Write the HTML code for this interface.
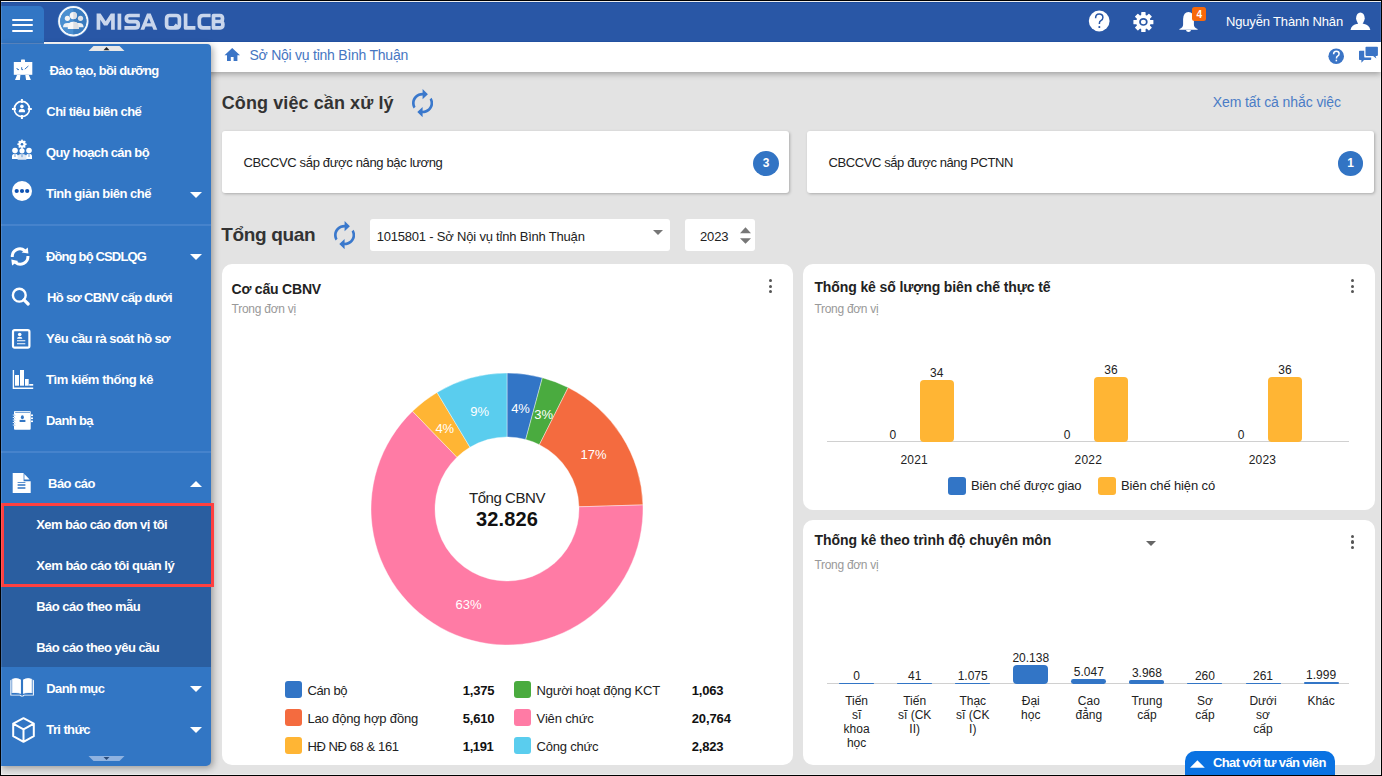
<!DOCTYPE html>
<html><head><meta charset="utf-8"><style>*{box-sizing:border-box;margin:0;padding:0}
html,body{width:1382px;height:776px;overflow:hidden;background:#000;font-family:"Liberation Sans",sans-serif}
.a{position:absolute}
.tx{position:absolute;white-space:nowrap}
#frame{position:absolute;left:1px;top:1px;width:1380px;height:774px;background:#ededed}
.fl{position:absolute;pointer-events:none}
#pg{position:absolute;left:0;top:0;width:1382px;height:776px;clip-path:inset(2px 1px 1px 1px);overflow:hidden}
</style></head><body>
<div id="frame"></div>
<div id="pg">
<div class='a' style='left:2px;top:2px;width:1378px;height:772px;background:#e3e3e3'></div>
<div class='tx' style='left:221.70px;top:92.00px;font-size:18px;line-height:22px;font-weight:700;color:#333;letter-spacing:0.100px;'>Công việc cần xử lý</div>
<svg class='a' style='left:411.8px;top:88.8px' width='21.2' height='28.2' viewBox='4 1 16 22' preserveAspectRatio='none'><path d='M12 6v3l4-4-4-4v3c-4.42 0-8 3.58-8 8 0 1.57.46 3.03 1.24 4.26L6.7 14.8c-.45-.83-.7-1.79-.7-2.8 0-3.31 2.69-6 6-6zm6.76 1.74L17.3 9.2c.44.84.7 1.79.7 2.8 0 3.31-2.69 6-6 6v-3l-4 4 4 4v-3c4.42 0 8-3.58 8-8 0-1.57-.46-3.03-1.24-4.26z' fill='#3a78cc'/></svg>
<div class='tx' style='left:1212.70px;top:93.00px;font-size:14px;line-height:18px;font-weight:400;color:#4a7cc6;letter-spacing:-0.083px;'>Xem tất cả nhắc việc</div>
<div class='a' style='left:222px;top:131px;width:567px;height:62px;background:#fff;border-radius:3px;box-shadow:1px 1px 3px rgba(0,0,0,.25)'></div>
<div class='tx' style='left:243.50px;top:155.00px;font-size:13px;line-height:16px;font-weight:400;color:#222;letter-spacing:-0.344px;'>CBCCVC sắp được nâng bậc lương</div>
<div class='a' style='left:753.2px;top:150.5px;width:25.6px;height:25px;border-radius:50%;background:#3274c4'></div>
<div class='tx' style='left:762.66px;top:156.00px;font-size:12px;line-height:15px;font-weight:700;color:#fff;letter-spacing:0.000px;'>3</div>
<div class='a' style='left:807px;top:131px;width:567px;height:62px;background:#fff;border-radius:3px;box-shadow:1px 1px 3px rgba(0,0,0,.25)'></div>
<div class='tx' style='left:828.50px;top:155.00px;font-size:13px;line-height:16px;font-weight:400;color:#222;letter-spacing:-0.403px;'>CBCCVC sắp được nâng PCTNN</div>
<div class='a' style='left:1337.9px;top:150.5px;width:25.6px;height:25px;border-radius:50%;background:#3274c4'></div>
<div class='tx' style='left:1347.36px;top:156.00px;font-size:12px;line-height:15px;font-weight:700;color:#fff;letter-spacing:0.000px;'>1</div>
<div class='tx' style='left:221.30px;top:223.00px;font-size:19px;line-height:24px;font-weight:700;color:#333;letter-spacing:-0.344px;'>Tổng quan</div>
<svg class='a' style='left:333.6px;top:221px' width='21.2' height='28.2' viewBox='4 1 16 22' preserveAspectRatio='none'><path d='M12 6v3l4-4-4-4v3c-4.42 0-8 3.58-8 8 0 1.57.46 3.03 1.24 4.26L6.7 14.8c-.45-.83-.7-1.79-.7-2.8 0-3.31 2.69-6 6-6zm6.76 1.74L17.3 9.2c.44.84.7 1.79.7 2.8 0 3.31-2.69 6-6 6v-3l-4 4 4 4v-3c4.42 0 8-3.58 8-8 0-1.57-.46-3.03-1.24-4.26z' fill='#3a78cc'/></svg>
<div class='a' style='left:370px;top:219px;width:300px;height:32px;background:#fff;border-radius:3px'></div>
<div class='tx' style='left:376.70px;top:229.00px;font-size:13px;line-height:16px;font-weight:400;color:#222;letter-spacing:-0.200px;'>1015801 - Sở Nội vụ tỉnh Bình Thuận</div>
<svg class='a' style='left:653px;top:230px' width='10' height='5' viewBox='0 0 10 5'><path d='M0 0H10L5 5Z' fill='#777'/></svg>
<div class='a' style='left:685px;top:219px;width:70px;height:32px;background:#fff;border-radius:3px'></div>
<div class='tx' style='left:700.00px;top:229.00px;font-size:13px;line-height:16px;font-weight:400;color:#222;letter-spacing:-0.105px;'>2023</div>
<svg class='a' style='left:739.5px;top:226.5px' width='11' height='17' viewBox='0 0 11 17'><path d='M0 6.3H11L5.5 0.3Z M0 11.3H11L5.5 16.8Z' fill='#777'/></svg>
<div class='a' style='left:222px;top:264px;width:571px;height:501px;background:#fff;border-radius:10px'></div>
<div class='a' style='left:803px;top:264px;width:572px;height:246px;background:#fff;border-radius:10px'></div>
<div class='a' style='left:803px;top:520px;width:572px;height:245px;background:#fff;border-radius:10px'></div>
<div class='tx' style='left:231.50px;top:280.00px;font-size:14px;line-height:18px;font-weight:700;color:#222;letter-spacing:-0.195px;'>Cơ cấu CBNV</div>
<div class='tx' style='left:231.50px;top:302.00px;font-size:12px;line-height:15px;font-weight:400;color:#999;letter-spacing:-0.246px;'>Trong đơn vị</div>
<div class='a' style='left:768.9px;top:279.1px;width:3.4px;height:3.4px;border-radius:50%;background:#555'></div><div class='a' style='left:768.9px;top:284.6px;width:3.4px;height:3.4px;border-radius:50%;background:#555'></div><div class='a' style='left:768.9px;top:290.1px;width:3.4px;height:3.4px;border-radius:50%;background:#555'></div>
<svg class='a' style='left:357.1px;top:359.4px' width='300' height='300' viewBox='0 0 300 300'><path d='M150.000 14.000 A136 136 0 0 1 185.382 18.683 L168.731 80.479 A72 72 0 0 0 150.000 78.000Z' fill='#3275c6' stroke='#fff' stroke-width='0.4'/><path d='M185.382 18.683 A136 136 0 0 1 211.187 28.541 L182.393 85.698 A72 72 0 0 0 168.731 80.479Z' fill='#4aab3f' stroke='#fff' stroke-width='0.4'/><path d='M211.187 28.541 A136 136 0 0 1 285.937 145.875 L221.967 147.816 A72 72 0 0 0 182.393 85.698Z' fill='#f46b3f' stroke='#fff' stroke-width='0.4'/><path d='M285.937 145.875 A136 136 0 1 1 55.490 52.205 L99.965 98.226 A72 72 0 1 0 221.967 147.816Z' fill='#ff7ba5' stroke='#fff' stroke-width='0.4'/><path d='M55.490 52.205 A136 136 0 0 1 80.037 33.376 L112.961 88.258 A72 72 0 0 0 99.965 98.226Z' fill='#ffb534' stroke='#fff' stroke-width='0.4'/><path d='M80.037 33.376 A136 136 0 0 1 150.000 14.000 L150.000 78.000 A72 72 0 0 0 112.961 88.258Z' fill='#5acdee' stroke='#fff' stroke-width='0.4'/></svg>
<div class='tx' style='left:511.14px;top:401.00px;font-size:13px;line-height:16px;font-weight:400;color:#fff;letter-spacing:0.000px;'>4%</div>
<div class='tx' style='left:534.25px;top:407.00px;font-size:13px;line-height:16px;font-weight:400;color:#fff;letter-spacing:0.000px;'>3%</div>
<div class='tx' style='left:580.45px;top:447.00px;font-size:13px;line-height:16px;font-weight:400;color:#fff;letter-spacing:0.000px;'>17%</div>
<div class='tx' style='left:455.53px;top:597.00px;font-size:13px;line-height:16px;font-weight:400;color:#fff;letter-spacing:0.000px;'>63%</div>
<div class='tx' style='left:435.38px;top:421.00px;font-size:13px;line-height:16px;font-weight:400;color:#fff;letter-spacing:0.000px;'>4%</div>
<div class='tx' style='left:470.37px;top:404.00px;font-size:13px;line-height:16px;font-weight:400;color:#fff;letter-spacing:0.000px;'>9%</div>
<div class='tx' style='left:469.00px;top:488.00px;font-size:15px;line-height:19px;font-weight:400;color:#222;letter-spacing:-0.450px;'>Tổng CBNV</div>
<div class='tx' style='left:476.00px;top:507.00px;font-size:20px;line-height:25px;font-weight:700;color:#111;letter-spacing:0.138px;'>32.826</div>
<div class='a' style='left:284.5px;top:681.4px;width:17px;height:17px;border-radius:3px;background:#3275c6'></div>
<div class='tx' style='left:307.40px;top:683.00px;font-size:13px;line-height:16px;font-weight:400;color:#222;letter-spacing:-0.354px;'>Cán bộ</div>
<div class='tx' style='left:462.80px;top:683.00px;font-size:13px;line-height:16px;font-weight:700;color:#111;letter-spacing:-0.229px;'>1,375</div>
<div class='a' style='left:284.5px;top:709.3px;width:17px;height:17px;border-radius:3px;background:#f46b3f'></div>
<div class='tx' style='left:307.40px;top:711.00px;font-size:13px;line-height:16px;font-weight:400;color:#222;letter-spacing:-0.151px;'>Lao động hợp đồng</div>
<div class='tx' style='left:462.80px;top:711.00px;font-size:13px;line-height:16px;font-weight:700;color:#111;letter-spacing:-0.229px;'>5,610</div>
<div class='a' style='left:284.5px;top:737.3px;width:17px;height:17px;border-radius:3px;background:#ffb534'></div>
<div class='tx' style='left:307.40px;top:739.00px;font-size:13px;line-height:16px;font-weight:400;color:#222;letter-spacing:-0.402px;'>HĐ NĐ 68 &amp; 161</div>
<div class='tx' style='left:462.80px;top:739.00px;font-size:13px;line-height:16px;font-weight:700;color:#111;letter-spacing:-0.389px;'>1,191</div>
<div class='a' style='left:513.7px;top:681.4px;width:17px;height:17px;border-radius:3px;background:#4aab3f'></div>
<div class='tx' style='left:536.60px;top:683.00px;font-size:13px;line-height:16px;font-weight:400;color:#222;letter-spacing:-0.237px;'>Người hoạt động KCT</div>
<div class='tx' style='left:691.70px;top:683.00px;font-size:13px;line-height:16px;font-weight:700;color:#111;letter-spacing:-0.189px;'>1,063</div>
<div class='a' style='left:513.7px;top:709.3px;width:17px;height:17px;border-radius:3px;background:#ff7ba5'></div>
<div class='tx' style='left:536.60px;top:711.00px;font-size:13px;line-height:16px;font-weight:400;color:#222;letter-spacing:-0.149px;'>Viên chức</div>
<div class='tx' style='left:691.70px;top:711.00px;font-size:13px;line-height:16px;font-weight:700;color:#111;letter-spacing:-0.111px;'>20,764</div>
<div class='a' style='left:513.7px;top:737.3px;width:17px;height:17px;border-radius:3px;background:#5acdee'></div>
<div class='tx' style='left:536.60px;top:739.00px;font-size:13px;line-height:16px;font-weight:400;color:#222;letter-spacing:-0.225px;'>Công chức</div>
<div class='tx' style='left:691.70px;top:739.00px;font-size:13px;line-height:16px;font-weight:700;color:#111;letter-spacing:-0.189px;'>2,823</div>
<div class='tx' style='left:814.40px;top:278.00px;font-size:14px;line-height:18px;font-weight:700;color:#222;letter-spacing:-0.102px;'>Thống kê số lượng biên chế thực tế</div>
<div class='tx' style='left:814.40px;top:302.00px;font-size:12px;line-height:15px;font-weight:400;color:#999;letter-spacing:-0.288px;'>Trong đơn vị</div>
<div class='a' style='left:1351.1px;top:279.1px;width:3.4px;height:3.4px;border-radius:50%;background:#555'></div><div class='a' style='left:1351.1px;top:284.6px;width:3.4px;height:3.4px;border-radius:50%;background:#555'></div><div class='a' style='left:1351.1px;top:290.1px;width:3.4px;height:3.4px;border-radius:50%;background:#555'></div>
<div class='a' style='left:827px;top:441px;width:522px;height:1px;background:#d0d0d0'></div>
<div class='a' style='left:920.0px;top:379.8px;width:33.5px;height:62.19999999999999px;border-radius:4px;background:#ffb534'></div>
<div class='tx' style='left:930.07px;top:366.00px;font-size:12px;line-height:15px;font-weight:400;color:#222;letter-spacing:0.000px;'>34</div>
<div class='tx' style='left:889.56px;top:428.00px;font-size:12px;line-height:15px;font-weight:400;color:#222;letter-spacing:0.000px;'>0</div>
<div class='tx' style='left:900.40px;top:453.00px;font-size:12px;line-height:15px;font-weight:400;color:#222;letter-spacing:0.199px;'>2021</div>
<div class='a' style='left:1094.15px;top:377px;width:33.5px;height:65px;border-radius:4px;background:#ffb534'></div>
<div class='tx' style='left:1104.22px;top:363.00px;font-size:12px;line-height:15px;font-weight:400;color:#222;letter-spacing:0.000px;'>36</div>
<div class='tx' style='left:1063.71px;top:428.00px;font-size:12px;line-height:15px;font-weight:400;color:#222;letter-spacing:0.000px;'>0</div>
<div class='tx' style='left:1074.55px;top:453.00px;font-size:12px;line-height:15px;font-weight:400;color:#222;letter-spacing:0.199px;'>2022</div>
<div class='a' style='left:1268.3px;top:377px;width:33.5px;height:65px;border-radius:4px;background:#ffb534'></div>
<div class='tx' style='left:1278.37px;top:363.00px;font-size:12px;line-height:15px;font-weight:400;color:#222;letter-spacing:0.000px;'>36</div>
<div class='tx' style='left:1237.86px;top:428.00px;font-size:12px;line-height:15px;font-weight:400;color:#222;letter-spacing:0.000px;'>0</div>
<div class='tx' style='left:1248.70px;top:453.00px;font-size:12px;line-height:15px;font-weight:400;color:#222;letter-spacing:0.199px;'>2023</div>
<div class='a' style='left:947.5px;top:477px;width:18px;height:18px;border-radius:3px;background:#3275c6'></div>
<div class='tx' style='left:970.90px;top:478.00px;font-size:13px;line-height:16px;font-weight:400;color:#222;letter-spacing:-0.159px;'>Biên chế được giao</div>
<div class='a' style='left:1097.5px;top:477px;width:18px;height:18px;border-radius:3px;background:#ffb534'></div>
<div class='tx' style='left:1121.00px;top:478.00px;font-size:13px;line-height:16px;font-weight:400;color:#222;letter-spacing:-0.133px;'>Biên chế hiện có</div>
<div class='tx' style='left:814.40px;top:531.00px;font-size:14px;line-height:18px;font-weight:700;color:#222;letter-spacing:-0.030px;'>Thống kê theo trình độ chuyên môn</div>
<div class='tx' style='left:814.40px;top:558.00px;font-size:12px;line-height:15px;font-weight:400;color:#999;letter-spacing:-0.288px;'>Trong đơn vị</div>
<svg class='a' style='left:1146px;top:540.5px' width='10' height='5' viewBox='0 0 10 5'><path d='M0 0H10L5 5Z' fill='#666'/></svg>
<div class='a' style='left:1351.1px;top:534.6999999999999px;width:3.4px;height:3.4px;border-radius:50%;background:#555'></div><div class='a' style='left:1351.1px;top:540.1999999999999px;width:3.4px;height:3.4px;border-radius:50%;background:#555'></div><div class='a' style='left:1351.1px;top:545.6999999999999px;width:3.4px;height:3.4px;border-radius:50%;background:#555'></div>
<div class='a' style='left:827px;top:683px;width:522px;height:1px;background:#d0d0d0'></div>
<div class='a' style='left:839.1px;top:682.60px;width:35px;height:1.00px;border-radius:0.50px;background:#3275c6'></div>
<div class='tx' style='left:853.26px;top:669.00px;font-size:12px;line-height:15px;font-weight:400;color:#222;letter-spacing:0.000px;'>0</div>
<div class='tx' style='left:845.15px;top:694.00px;font-size:12px;line-height:15px;font-weight:400;color:#222;letter-spacing:0.000px;'>Tiến</div>
<div class='tx' style='left:851.93px;top:708.00px;font-size:12px;line-height:15px;font-weight:400;color:#222;letter-spacing:0.000px;'>sĩ</div>
<div class='tx' style='left:843.58px;top:722.00px;font-size:12px;line-height:15px;font-weight:400;color:#222;letter-spacing:0.000px;'>khoa</div>
<div class='tx' style='left:846.92px;top:736.00px;font-size:12px;line-height:15px;font-weight:400;color:#222;letter-spacing:0.000px;'>học</div>
<div class='a' style='left:897.1600000000001px;top:682.60px;width:35px;height:1.00px;border-radius:0.50px;background:#3275c6'></div>
<div class='tx' style='left:907.98px;top:669.00px;font-size:12px;line-height:15px;font-weight:400;color:#222;letter-spacing:0.000px;'>41</div>
<div class='tx' style='left:903.21px;top:694.00px;font-size:12px;line-height:15px;font-weight:400;color:#222;letter-spacing:0.000px;'>Tiến</div>
<div class='tx' style='left:897.99px;top:708.00px;font-size:12px;line-height:15px;font-weight:400;color:#222;letter-spacing:0.000px;'>sĩ (CK</div>
<div class='tx' style='left:909.32px;top:722.00px;font-size:12px;line-height:15px;font-weight:400;color:#222;letter-spacing:0.000px;'>II)</div>
<div class='a' style='left:955.22px;top:682.59px;width:35px;height:1.01px;border-radius:0.51px;background:#3275c6'></div>
<div class='tx' style='left:957.70px;top:669.00px;font-size:12px;line-height:15px;font-weight:400;color:#222;letter-spacing:0.000px;'>1.075</div>
<div class='tx' style='left:959.38px;top:694.00px;font-size:12px;line-height:15px;font-weight:400;color:#222;letter-spacing:0.000px;'>Thạc</div>
<div class='tx' style='left:956.05px;top:708.00px;font-size:12px;line-height:15px;font-weight:400;color:#222;letter-spacing:0.000px;'>sĩ (CK</div>
<div class='tx' style='left:969.05px;top:722.00px;font-size:12px;line-height:15px;font-weight:400;color:#222;letter-spacing:0.000px;'>I)</div>
<div class='a' style='left:1013.28px;top:664.60px;width:35px;height:19.00px;border-radius:4.00px;background:#3275c6'></div>
<div class='tx' style='left:1012.43px;top:651.00px;font-size:12px;line-height:15px;font-weight:400;color:#222;letter-spacing:0.000px;'>20.138</div>
<div class='tx' style='left:1021.77px;top:694.00px;font-size:12px;line-height:15px;font-weight:400;color:#222;letter-spacing:0.000px;'>Đại</div>
<div class='tx' style='left:1021.10px;top:708.00px;font-size:12px;line-height:15px;font-weight:400;color:#222;letter-spacing:0.000px;'>học</div>
<div class='a' style='left:1071.3400000000001px;top:678.84px;width:35px;height:4.76px;border-radius:2.38px;background:#3275c6'></div>
<div class='tx' style='left:1073.82px;top:665.00px;font-size:12px;line-height:15px;font-weight:400;color:#222;letter-spacing:0.000px;'>5.047</div>
<div class='tx' style='left:1077.83px;top:694.00px;font-size:12px;line-height:15px;font-weight:400;color:#222;letter-spacing:0.000px;'>Cao</div>
<div class='tx' style='left:1075.49px;top:708.00px;font-size:12px;line-height:15px;font-weight:400;color:#222;letter-spacing:0.000px;'>đẳng</div>
<div class='a' style='left:1129.4px;top:679.86px;width:35px;height:3.74px;border-radius:1.87px;background:#3275c6'></div>
<div class='tx' style='left:1131.88px;top:666.00px;font-size:12px;line-height:15px;font-weight:400;color:#222;letter-spacing:0.000px;'>3.968</div>
<div class='tx' style='left:1131.45px;top:694.00px;font-size:12px;line-height:15px;font-weight:400;color:#222;letter-spacing:0.000px;'>Trung</div>
<div class='tx' style='left:1137.22px;top:708.00px;font-size:12px;line-height:15px;font-weight:400;color:#222;letter-spacing:0.000px;'>cấp</div>
<div class='a' style='left:1187.46px;top:682.60px;width:35px;height:1.00px;border-radius:0.50px;background:#3275c6'></div>
<div class='tx' style='left:1194.94px;top:669.00px;font-size:12px;line-height:15px;font-weight:400;color:#222;letter-spacing:0.000px;'>260</div>
<div class='tx' style='left:1197.02px;top:694.00px;font-size:12px;line-height:15px;font-weight:400;color:#222;letter-spacing:0.000px;'>Sơ</div>
<div class='tx' style='left:1195.28px;top:708.00px;font-size:12px;line-height:15px;font-weight:400;color:#222;letter-spacing:0.000px;'>cấp</div>
<div class='a' style='left:1245.52px;top:682.60px;width:35px;height:1.00px;border-radius:0.50px;background:#3275c6'></div>
<div class='tx' style='left:1253.00px;top:669.00px;font-size:12px;line-height:15px;font-weight:400;color:#222;letter-spacing:0.000px;'>261</div>
<div class='tx' style='left:1249.40px;top:694.00px;font-size:12px;line-height:15px;font-weight:400;color:#222;letter-spacing:0.000px;'>Dưới</div>
<div class='tx' style='left:1256.08px;top:708.00px;font-size:12px;line-height:15px;font-weight:400;color:#222;letter-spacing:0.000px;'>sơ</div>
<div class='tx' style='left:1253.34px;top:722.00px;font-size:12px;line-height:15px;font-weight:400;color:#222;letter-spacing:0.000px;'>cấp</div>
<div class='a' style='left:1303.58px;top:681.71px;width:35px;height:1.89px;border-radius:0.94px;background:#3275c6'></div>
<div class='tx' style='left:1306.06px;top:668.00px;font-size:12px;line-height:15px;font-weight:400;color:#222;letter-spacing:0.000px;'>1.999</div>
<div class='tx' style='left:1307.40px;top:694.00px;font-size:12px;line-height:15px;font-weight:400;color:#222;letter-spacing:0.000px;'>Khác</div>
<div class='a' style='left:1185px;top:751px;width:150px;height:30px;background:#0a72e2;border-radius:10px 10px 0 0'></div>
<svg class='a' style='left:1190px;top:760px' width='15' height='8' viewBox='0 0 15 8'><path d='M0 7.8H14.8L7.4 0.2Z' fill='#fff'/></svg>
<div class='tx' style='left:1213.00px;top:755.00px;font-size:13px;line-height:16px;font-weight:700;color:#fff;letter-spacing:-0.644px;'>Chat với tư vấn viên</div>
<div class='a' style='left:0;top:42px;width:1382px;height:30px;background:#fff;box-shadow:0 3px 6px -1px rgba(0,0,0,.3)'></div>
<svg class='a' style='left:224px;top:47px' width='17' height='15' viewBox='0 0 17 15'>
<path d='M8.2 1 L0.5 8.2 H3 V14 H6.8 V10 H9.6 V14 H13.4 V8.2 H16 Z' fill='#3a74c6'/>
</svg>
<div class='tx' style='left:249.50px;top:46.00px;font-size:14px;line-height:18px;font-weight:400;color:#4676c2;letter-spacing:-0.243px;'>Sở Nội vụ tỉnh Bình Thuận</div>
<svg class='a' style='left:1328px;top:48px' width='17' height='17' viewBox='0 0 17 17'>
<circle cx='8.2' cy='8.2' r='7.8' fill='#3a74c6'/>
<path d='M5.6 6.3 q0-3 2.7-3 q2.8 0 2.8 2.5 q0 1.5-1.5 2.3 q-1.1.7-1.1 1.9 v.6' fill='none' stroke='#fff' stroke-width='1.5'/>
<rect x='7.6' y='11.7' width='1.5' height='1.6' fill='#fff'/>
</svg>
<svg class='a' style='left:1358px;top:46px' width='21' height='18' viewBox='0 0 21 18'>
<path d='M7.5 1.5 q0-.8.8-.8 h10.8 q.8 0 .8.8 v7.6 q0 .8-.8.8 h-1.5 l.8 2.6 l-3.3-2.6 h-6.8 q-.8 0-.8-.8z' fill='#3a74c6'/>
<path d='M1 5.6 q0-.8.8-.8 h4.4 v5.6 q0 1.2 1.2 1.2 h5.8 v1.7 q0 .8-.8.8 h-6.4 l-2.6 2.7 v-2.7 h-1.6 q-.8 0-.8-.8z' fill='#3a74c6'/>
</svg>
<div class='a' style='left:0;top:0;width:1382px;height:42px;background:#2957a6'></div>
<div class='a' style='left:0;top:2px;width:1382px;height:1px;background:#1d4d9e'></div>
<div class='a' style='left:0;top:41px;width:1382px;height:1px;background:#2251a0'></div>
<div class='a' style='left:0;top:6px;width:44px;height:37px;background:#3276c4;border-top-right-radius:5px'></div>
<div class='a' style='left:0;top:43px;width:44px;height:1px;background:#5d8ccb'></div>
<div class='a' style='left:12px;top:19px;width:21px;height:2px;background:#fff;border-radius:1px'></div>
<div class='a' style='left:12px;top:24px;width:21px;height:2px;background:#fff;border-radius:1px'></div>
<div class='a' style='left:12px;top:30px;width:21px;height:2px;background:#fff;border-radius:1px'></div>
<svg class='a' style='left:57px;top:5px' width='33' height='33' viewBox='0 0 33 33'>
<defs><clipPath id='lc'><circle cx='16.3' cy='16.2' r='13'/></clipPath></defs>
<circle cx='16.3' cy='16.2' r='16' fill='#3d7dc8' opacity='.55'/>
<circle cx='16.3' cy='16.2' r='14.1' fill='none' stroke='#f4f7fb' stroke-width='2.2'/>
<circle cx='16.3' cy='16.2' r='13.1' fill='#4a8fd0'/>
<rect x='16.3' y='2' width='15' height='29' fill='#3a7cbf' clip-path='url(#lc)'/>
<circle cx='10.4' cy='13.3' r='2.6' fill='#f2f4f6'/><circle cx='23.5' cy='13.3' r='2.6' fill='#dfe3e8'/>
<path d='M6 22.3 q0-4.4 4.4-4.4 h2 v4.4z M26.6 22.3 q0-4.4-4.4-4.4 h-2 v4.4z' fill='#eef1f4'/>
<circle cx='16.3' cy='10.6' r='3.6' fill='#f6f7f8'/>
<path d='M10.8 24 v-2 q0-5.2 5.5-5.2 q5.5 0 5.5 5.2 v2z' fill='#f7f8f9'/>
<path d='M16.3 6.8 a3.6 3.6 0 0 1 0 7.2z M16.3 16.8 q5.5 0 5.5 5.2 v2 h-5.5z' fill='#dcdfe3'/>
</svg>
<svg class='a' style='left:0;top:0' width='240' height='42' viewBox='0 0 240 42'>
<g fill='none' stroke='#c9d6ec' stroke-width='3.7' stroke-linejoin='round'>
<path d='M119.4 13.6 V29.8'/>
<path d='M139.8 15.5 H129.5 q-3.2 0-3.2 3 q0 3.2 3.2 3.2 h5.6 q3.2 0 3.2 3.2 q0 3-3.2 3 H124.4'/>
<path d='M169.8 15.5 h6.4 q3.2 0 3.2 3.2 v6 q0 3.2-3.2 3.2 h-6.4 q-3.2 0-3.2-3.2 v-6 q0-3.2 3.2-3.2z M174.6 24.8 l3.4 3'/>
<path d='M185.6 13.6 V27.9 H195.4'/>
<path d='M210.6 15.5 h-7.4 q-3.9 0-3.9 3.9 v4.6 q0 3.9 3.9 3.9 h7.4'/>
<path d='M213.5 15.5 h6.4 q2.6 0 2.6 2.9 q0 3.1-2.6 3.1 h-6.4 h6.8 q2.6 0 2.6 3.1 q0 3.3-2.6 3.3 h-6.8z'/>
</g>
<path d='M96.6 29.8 V13.6 H100.6 L105.7 21.2 L110.8 13.6 H114.8 V29.8 H111.1 V19.8 L107.4 25.4 H104 L100.3 19.8 V29.8Z' fill='#c9d6ec'/>
<path d='M140.4 29.8 L147 13.6 H150.7 L157.3 29.8 H153.4 L152.1 26.4 H145.6 L144.3 29.8Z M146.8 23.3 H150.9 L148.85 17.9Z' fill='#c9d6ec' fill-rule='evenodd'/>
</svg>
<svg class='a' style='left:1088px;top:10px' width='22' height='22' viewBox='0 0 22 22'>
<circle cx='11.2' cy='11' r='10.4' fill='#fff'/>
<path d='M7.6 8.2 q0-4.1 3.6-4.1 q3.7 0 3.7 3.4 q0 2-2 3.1 q-1.5.9-1.5 2.6 v.8' fill='none' stroke='#2957a6' stroke-width='1.5'/>
<rect x='10.5' y='16.1' width='1.7' height='1.9' fill='#2957a6'/>
</svg>
<svg class='a' style='left:1132px;top:10.5px' width='23' height='23' viewBox='0 0 23 23'>
<rect x='9.2' y='1.1' width='4.4' height='4.6' rx='.6' fill='#fff' transform='rotate(0 11.4 11.1)'/><rect x='9.2' y='1.1' width='4.4' height='4.6' rx='.6' fill='#fff' transform='rotate(45 11.4 11.1)'/><rect x='9.2' y='1.1' width='4.4' height='4.6' rx='.6' fill='#fff' transform='rotate(90 11.4 11.1)'/><rect x='9.2' y='1.1' width='4.4' height='4.6' rx='.6' fill='#fff' transform='rotate(135 11.4 11.1)'/><rect x='9.2' y='1.1' width='4.4' height='4.6' rx='.6' fill='#fff' transform='rotate(180 11.4 11.1)'/><rect x='9.2' y='1.1' width='4.4' height='4.6' rx='.6' fill='#fff' transform='rotate(225 11.4 11.1)'/><rect x='9.2' y='1.1' width='4.4' height='4.6' rx='.6' fill='#fff' transform='rotate(270 11.4 11.1)'/><rect x='9.2' y='1.1' width='4.4' height='4.6' rx='.6' fill='#fff' transform='rotate(315 11.4 11.1)'/><circle cx='11.4' cy='11.1' r='7.3' fill='#fff'/>
<ellipse cx='11.4' cy='10.9' rx='3.4' ry='3.1' fill='none' stroke='#2957a6' stroke-width='1.7'/>
</svg>
<svg class='a' style='left:1178px;top:11px' width='22' height='22' viewBox='0 0 22 22'>
<path d='M10.5 1 q-5 0-5.4 7 v5.5 q0 3.2-3.7 4.5 v.8 h18.2 v-.8 q-3.7-1.3-3.7-4.5 v-5.5 q-.4-7-5.4-7z' fill='#fff'/>
<path d='M8 19 h5 q-.3 2-2.5 2 q-2.2 0-2.5-2z' fill='#fff'/>
</svg>
<div class='a' style='left:1192px;top:7px;width:14px;height:14px;background:#f7690c;border-radius:2.5px'></div>
<div class='tx' style='left:1196.42px;top:9.00px;font-size:10px;line-height:12px;font-weight:700;color:#fff;letter-spacing:0.000px;'>4</div>
<div class='tx' style='left:1226.00px;top:14.00px;font-size:13px;line-height:16px;font-weight:400;color:#fff;letter-spacing:-0.162px;'>Nguyễn Thành Nhân</div>
<svg class='a' style='left:1349px;top:12px' width='22' height='20' viewBox='0 0 22 20'>
<ellipse cx='11.4' cy='6.2' rx='4.3' ry='5.8' fill='#fff'/>
<path d='M1.5 18 q1-5.5 7-6.2 h5.8 q6 .7 7 6.2z' fill='#fff'/>
<path d='M9 10 h4.8 v2.6 h-4.8z' fill='#fff'/>
</svg>
<div class='a' style='left:0;top:44px;width:211px;height:722px;background:#3276c4;border-radius:0 4px 5px 0;box-shadow:2px 2px 7px rgba(0,0,0,.33)'></div>
<svg class='a' style='left:88px;top:46px' width='37' height='5' viewBox='0 0 37 5'><path d='M5.5 0 H31.5 L36.5 5 H0.5Z' fill='#e8e8e8'/><path d='M15.5 4.2 L18.5 1 L21.5 4.2Z' fill='#222'/></svg>
<div class='a' style='left:0;top:224px;width:211px;height:2px;background:#4683cc'></div>
<div class='a' style='left:0;top:451px;width:211px;height:2px;background:#4683cc'></div>
<div class='a' style='left:0;top:503px;width:211px;height:164px;background:#2a5ea0'></div>
<div class='tx' style='left:49.50px;top:63.00px;font-size:13px;line-height:16px;font-weight:700;color:#fff;letter-spacing:-0.638px;'>Đào tạo, bồi dưỡng</div>
<div class='tx' style='left:46.30px;top:104.00px;font-size:13px;line-height:16px;font-weight:700;color:#fff;letter-spacing:-0.530px;'>Chỉ tiêu biên chế</div>
<div class='tx' style='left:46.00px;top:145.00px;font-size:13px;line-height:16px;font-weight:700;color:#fff;letter-spacing:-0.605px;'>Quy hoạch cán bộ</div>
<div class='tx' style='left:46.00px;top:186.00px;font-size:13px;line-height:16px;font-weight:700;color:#fff;letter-spacing:-0.494px;'>Tinh giản biên chế</div>
<div class='tx' style='left:46.00px;top:249.00px;font-size:13px;line-height:16px;font-weight:700;color:#fff;letter-spacing:-0.853px;'>Đồng bộ CSDLQG</div>
<div class='tx' style='left:47.00px;top:290.00px;font-size:13px;line-height:16px;font-weight:700;color:#fff;letter-spacing:-0.669px;'>Hồ sơ CBNV cấp dưới</div>
<div class='tx' style='left:46.00px;top:331.00px;font-size:13px;line-height:16px;font-weight:700;color:#fff;letter-spacing:-0.557px;'>Yêu cầu rà soát hồ sơ</div>
<div class='tx' style='left:46.00px;top:372.00px;font-size:13px;line-height:16px;font-weight:700;color:#fff;letter-spacing:-0.420px;'>Tìm kiếm thống kê</div>
<div class='tx' style='left:46.00px;top:413.00px;font-size:13px;line-height:16px;font-weight:700;color:#fff;letter-spacing:-0.614px;'>Danh bạ</div>
<div class='tx' style='left:48.00px;top:476.00px;font-size:13px;line-height:16px;font-weight:700;color:#fff;letter-spacing:-0.511px;'>Báo cáo</div>
<div class='tx' style='left:36.20px;top:517.00px;font-size:13px;line-height:16px;font-weight:700;color:#fff;letter-spacing:-0.540px;'>Xem báo cáo đơn vị tôi</div>
<div class='tx' style='left:36.20px;top:558.00px;font-size:13px;line-height:16px;font-weight:700;color:#fff;letter-spacing:-0.470px;'>Xem báo cáo tôi quản lý</div>
<div class='tx' style='left:36.20px;top:599.00px;font-size:13px;line-height:16px;font-weight:700;color:#fff;letter-spacing:-0.498px;'>Báo cáo theo mẫu</div>
<div class='tx' style='left:36.20px;top:640.00px;font-size:13px;line-height:16px;font-weight:700;color:#fff;letter-spacing:-0.533px;'>Báo cáo theo yêu cầu</div>
<div class='tx' style='left:46.30px;top:681.00px;font-size:13px;line-height:16px;font-weight:700;color:#fff;letter-spacing:-0.605px;'>Danh mục</div>
<div class='tx' style='left:46.30px;top:722.00px;font-size:13px;line-height:16px;font-weight:700;color:#fff;letter-spacing:-0.603px;'>Tri thức</div>
<svg class='a' style='left:190px;top:192px' width='12' height='6' viewBox='0 0 12 6'><path d='M0 0 L6 6 L12 0Z' fill='#fff'/></svg>
<svg class='a' style='left:190px;top:254px' width='12' height='6' viewBox='0 0 12 6'><path d='M0 0 L6 6 L12 0Z' fill='#fff'/></svg>
<svg class='a' style='left:190px;top:686px' width='12' height='6' viewBox='0 0 12 6'><path d='M0 0 L6 6 L12 0Z' fill='#fff'/></svg>
<svg class='a' style='left:190px;top:727px' width='12' height='6' viewBox='0 0 12 6'><path d='M0 0 L6 6 L12 0Z' fill='#fff'/></svg>
<svg class='a' style='left:190px;top:481px' width='12' height='6' viewBox='0 0 12 6'><path d='M0 6 L6 0 L12 6Z' fill='#fff'/></svg>
<svg class='a' style='left:12px;top:58px' width='22' height='24' viewBox='0 0 22 24'>
<rect x='1.8' y='4' width='18.5' height='12.8' fill='#fff'/>
<rect x='9' y='1.6' width='4' height='3' rx='.6' fill='#fff'/>
<path d='M5 17 H8.4 L7.9 22 H3Z M13.3 17 H16.8 L18.9 22 H14.1Z' fill='#fff'/>
<path d='M4.8 10 l.8 1.6 h1.4 M9.7 9.2 v2.4 h1.4 M12.8 11.2 l3.6-3.2' stroke='#3276c4' stroke-width='1' fill='none'/>
</svg>
<svg class='a' style='left:10px;top:97px' width='24' height='24' viewBox='0 0 24 24'>
<circle cx='11.9' cy='12' r='7.6' stroke='#fff' stroke-width='1.7' fill='none'/>
<path d='M11.9 2 v4 M11.9 18 v4 M2 12 h4 M17.8 12 h4' stroke='#fff' stroke-width='2'/>
<circle cx='11.9' cy='9.4' r='1.8' fill='#fff'/>
<path d='M8.8 15.3 v-1 q0-2.5 3.1-2.5 q3.1 0 3.1 2.5 v1z' fill='#fff'/>
</svg>
<svg class='a' style='left:12px;top:139px' width='21' height='22' viewBox='0 0 21 22'>
<rect x='9.2' y='0.6' width='1.6' height='2.6' fill='#fff' transform='rotate(0 10 5.2)'/><rect x='9.2' y='0.6' width='1.6' height='2.6' fill='#fff' transform='rotate(45 10 5.2)'/><rect x='9.2' y='0.6' width='1.6' height='2.6' fill='#fff' transform='rotate(90 10 5.2)'/><rect x='9.2' y='0.6' width='1.6' height='2.6' fill='#fff' transform='rotate(135 10 5.2)'/><rect x='9.2' y='0.6' width='1.6' height='2.6' fill='#fff' transform='rotate(180 10 5.2)'/><rect x='9.2' y='0.6' width='1.6' height='2.6' fill='#fff' transform='rotate(225 10 5.2)'/><rect x='9.2' y='0.6' width='1.6' height='2.6' fill='#fff' transform='rotate(270 10 5.2)'/><rect x='9.2' y='0.6' width='1.6' height='2.6' fill='#fff' transform='rotate(315 10 5.2)'/><circle cx='10' cy='5.2' r='3.6' fill='#fff'/><circle cx='10' cy='5.2' r='1.3' fill='#3276c4'/>
<circle cx='3' cy='11.5' r='2.8' fill='#fff'/><circle cx='10' cy='11.8' r='2.6' fill='#fff'/><circle cx='17' cy='11.5' r='2.8' fill='#fff'/>
<path d='M0 20 v-2.5 q0-2.8 3-2.8 q3 0 3 2.8 v2.5z M14 20 v-2.5 q0-2.8 3-2.8 q3 0 3 2.8 v2.5z' fill='#fff'/>
<path d='M5.6 20.8 v-3 q0-2.8 4.4-2.8 q4.4 0 4.4 2.8 v3z' fill='#dfe8f4'/>
<path d='M3 15 v3 M17 15 v3 M10 15.2 v3' stroke='#3276c4' stroke-width='.7'/>
</svg>
<svg class='a' style='left:11px;top:180px' width='22' height='22' viewBox='0 0 22 22'>
<circle cx='11' cy='11' r='10' fill='#fff'/>
<circle cx='5.7' cy='11' r='2.1' fill='#0e52b2'/><circle cx='11' cy='11' r='2.1' fill='#0e52b2'/><circle cx='16.2' cy='11' r='2.1' fill='#0e52b2'/>
</svg>
<svg class='a' style='left:10px;top:246px' width='21' height='21' viewBox='0 0 21 21'>
<path d='M2.3 11 A7.6 7.6 0 0 1 14.8 4.7' fill='none' stroke='#fff' stroke-width='3'/>
<path d='M18.4 7.6 L17.8 1.4 L11.6 6.6Z' fill='#fff'/>
<path d='M17.9 10 A7.6 7.6 0 0 1 5.4 16.3' fill='none' stroke='#fff' stroke-width='3'/>
<path d='M1.3 13.4 L2.1 19.6 L8.3 15Z' fill='#fff'/>
</svg>
<svg class='a' style='left:10px;top:286px' width='21' height='21' viewBox='0 0 21 21'>
<circle cx='9.3' cy='9.2' r='6.4' fill='none' stroke='#fff' stroke-width='2.4'/>
<path d='M14 13.9 L18.2 18' stroke='#fff' stroke-width='3.2' stroke-linecap='round'/>
</svg>
<svg class='a' style='left:11px;top:328px' width='21' height='22' viewBox='0 0 21 22'>
<rect x='2' y='2.1' width='16.4' height='17.6' rx='1.6' fill='none' stroke='#fff' stroke-width='2.2'/>
<circle cx='8.7' cy='6.5' r='1.8' fill='#fff'/>
<path d='M6 10.8 q0-2 2.7-2 q2.7 0 2.7 2z' fill='#fff'/>
<path d='M6 12.8 h8.3 M6 15.8 h8.3' stroke='#fff' stroke-width='1.1'/>
</svg>
<svg class='a' style='left:12px;top:369px' width='22' height='21' viewBox='0 0 22 21'>
<path d='M1.4 1 V19.2 H21.2' fill='none' stroke='#fff' stroke-width='1.4'/>
<rect x='3' y='6' width='4' height='10.7' fill='#fff'/><rect x='8' y='1' width='4' height='15.7' fill='#fff'/>
<rect x='13' y='10' width='3.7' height='6.7' fill='#fff'/><rect x='17.2' y='15' width='4' height='1.7' fill='#fff'/>
</svg>
<svg class='a' style='left:12px;top:410px' width='22' height='21' viewBox='0 0 22 21'>
<rect x='2' y='1' width='16.7' height='18.8' rx='1' fill='#fff'/>
<path d='M3.2 2.3 H18' stroke='#3276c4' stroke-width='.8'/>
<rect x='19' y='4.5' width='2' height='1.6' fill='#fff'/><rect x='19' y='7.5' width='2' height='1.6' fill='#fff'/><rect x='19' y='10.5' width='2' height='1.6' fill='#fff'/>
<path d='M.8 5 h2 M.8 7.5 h2 M.8 10 h2 M.8 12.5 h2 M.8 15 h2' stroke='#fff' stroke-width='1.2'/>
<path d='M1.6 4.2 l1.5 1.6 M1.6 6.7 l1.5 1.6 M1.6 9.2 l1.5 1.6 M1.6 11.7 l1.5 1.6 M1.6 14.2 l1.5 1.6' stroke='#3276c4' stroke-width='.5'/>
<ellipse cx='10.4' cy='7.3' rx='1.5' ry='2' fill='#3276c4'/>
<rect x='7.6' y='9.9' width='5.8' height='2.1' fill='#3276c4'/>
</svg>
<svg class='a' style='left:12px;top:472px' width='20' height='22' viewBox='0 0 20 22'>
<path d='M0.7 1 H11.6 V9.2 H18.7 V21 H0.7Z' fill='#fff'/>
<path d='M12.4 2 L17.6 7.6 H12.4Z' fill='#fff'/>
<path d='M5.6 10.5 H13.4' stroke='#3276c4' stroke-width='.8'/>
<path d='M5.6 13 H13.4 M5.6 16 H13.4' stroke='#3276c4' stroke-width='1.3'/>
</svg>
<svg class='a' style='left:10px;top:678px' width='24' height='19' viewBox='0 0 24 19'>
<path d='M0.3 2.8 q0-1 1-1 v14.9 h8.5 q1.5 0 1.8 1 h1 q.3-1 1.8-1 h8.5 v-14.9 q1 0 1 1 v14.6 h-9.2 q-1 0-1.4 1 h-2.4 q-.4-1-1.4-1 h-9.2z' fill='#fff'/>
<path d='M1.6 2 q0-1.8 3.5-1.8 q3.9 0 5.7 1.6 v14.2 q-1.8-1.1-5.2-1.1 h-4z' fill='#dbe6f4'/>
<path d='M3 2 q0-1.8 3-1.8 q3.4 0 4.8 1.6 v13.6 q-1.6-1-4.4-1 h-3.4z' fill='#fff'/>
<path d='M22.4 2 q0-1.8-3.5-1.8 q-3.9 0-5.7 1.6 v14.2 q1.8-1.1 5.2-1.1 h4z' fill='#dbe6f4'/>
<path d='M21 2 q0-1.8-3-1.8 q-3.4 0-4.8 1.6 v13.6 q1.6-1 4.4-1 h3.4z' fill='#fff'/>
</svg>
<svg class='a' style='left:12px;top:717px' width='23' height='26' viewBox='0 0 23 26'>
<path d='M11.5 1.2 L21.8 6.6 V19.2 L11.5 24.8 L1.2 19.2 V6.6Z M1.2 6.6 L11.5 12.3 L21.8 6.6 M11.5 12.3 V24.8' fill='none' stroke='#fff' stroke-width='2' stroke-linejoin='round'/>
</svg>
<svg class='a' style='left:88px;top:756px' width='37' height='5' viewBox='0 0 37 5'><path d='M0.5 0 H36.5 L31.5 5 H5.5Z' fill='#8fb2e0'/><path d='M15.5 1 L18.5 4 L21.5 1Z' fill='#2a4a78'/></svg>
<div class='a' style='left:1px;top:503px;width:213px;height:84px;border:3px solid #ff4040'></div>
<div class='fl' style='left:1px;top:2px;width:1px;height:772px;background:rgba(255,255,255,.12)'></div>
<div class='fl' style='left:1380px;top:2px;width:1px;height:772px;background:rgba(255,255,255,.12)'></div>
</div>
</body></html>
